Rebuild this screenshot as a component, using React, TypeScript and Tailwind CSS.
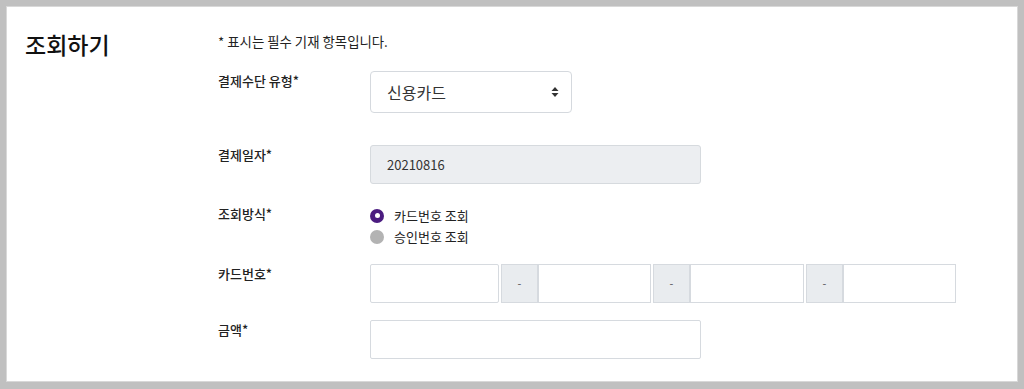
import React from "react";

const font = { fontFamily: '"Noto Sans CJK KR", "Noto Sans", sans-serif' };

function Label({ children }: { children: React.ReactNode }) {
  return (
    <div className="w-[152px] shrink-0 text-[13px] leading-[20px] font-medium text-[#222]">
      {children}
    </div>
  );
}

function Addon() {
  return (
    <div className="ml-[2px] w-[37px] h-full bg-[#e9ecef] border border-[#d6dadf] flex items-center justify-center text-[11px] text-[#555]">
      -
    </div>
  );
}

export default function App() {
  return (
    <div style={font} className="w-[1024px] h-[389px] bg-[#c0c0c0] pt-[6px] px-[6px] pb-[7px]">
      <div className="h-full bg-white border border-[#d8d8d8] flex">
        <div className="w-[211px] shrink-0 pl-[18px] pt-[22px]">
          <h1 className="text-[23px] leading-[30px] font-medium text-[#111]">조회하기</h1>
        </div>
        <div className="flex-1 pt-[24px]">
          <div className="text-[13.4px] leading-[20px] text-[#222]">* 표시는 필수 기재 항목입니다.</div>

          <div className="flex mt-[20px]">
            <Label>결제수단 유형*</Label>
            <div className="w-[202px] h-[42px] border border-[#d5d9de] rounded-[4px] flex items-center justify-between pl-[16px] pr-[12px] text-[16px] text-[#333]">
              <span>신용카드</span>
              <svg width="8" height="12" viewBox="0 0 8 12">
                <path d="M4 1 L7.5 5 L0.5 5 Z" fill="#333" />
                <path d="M4 11 L7.5 7 L0.5 7 Z" fill="#333" />
              </svg>
            </div>
          </div>

          <div className="flex mt-[32px]">
            <Label>결제일자*</Label>
            <div className="w-[331px] h-[39px] bg-[#eceef1] border border-[#d6dade] rounded-[3px] flex items-center pl-[16px] text-[13px] text-[#333]">
              20210816
            </div>
          </div>

          <div className="flex mt-[20px]">
            <Label>조회방식*</Label>
            <div className="flex flex-col text-[13px] leading-[21px] text-[#222] pt-[1px]">
              <div className="flex items-center">
                <span className="w-[14px] h-[14px] rounded-full bg-[#4b1c80] flex items-center justify-center">
                  <span className="w-[5px] h-[5px] rounded-full bg-white" />
                </span>
                <span className="ml-[10px]">카드번호 조회</span>
              </div>
              <div className="flex items-center">
                <span className="w-[14px] h-[14px] rounded-full bg-[#b3b3b3]" />
                <span className="ml-[10px]">승인번호 조회</span>
              </div>
            </div>
          </div>

          <div className="flex mt-[17px]">
            <Label>카드번호*</Label>
            <div className="flex h-[39px]">
              <div className="w-[129px] h-full border border-[#d6dadf] rounded-[2px]" />
              <Addon />
              <div className="w-[113px] h-full border border-[#d6dadf]" />
              <Addon />
              <div className="w-[114px] h-full border border-[#d6dadf]" />
              <Addon />
              <div className="w-[113px] h-full border border-[#d6dadf]" />
            </div>
          </div>

          <div className="flex mt-[17px]">
            <Label>금액*</Label>
            <div className="w-[331px] h-[39px] border border-[#d6dadf] rounded-[2px]" />
          </div>
        </div>
      </div>
    </div>
  );
}
